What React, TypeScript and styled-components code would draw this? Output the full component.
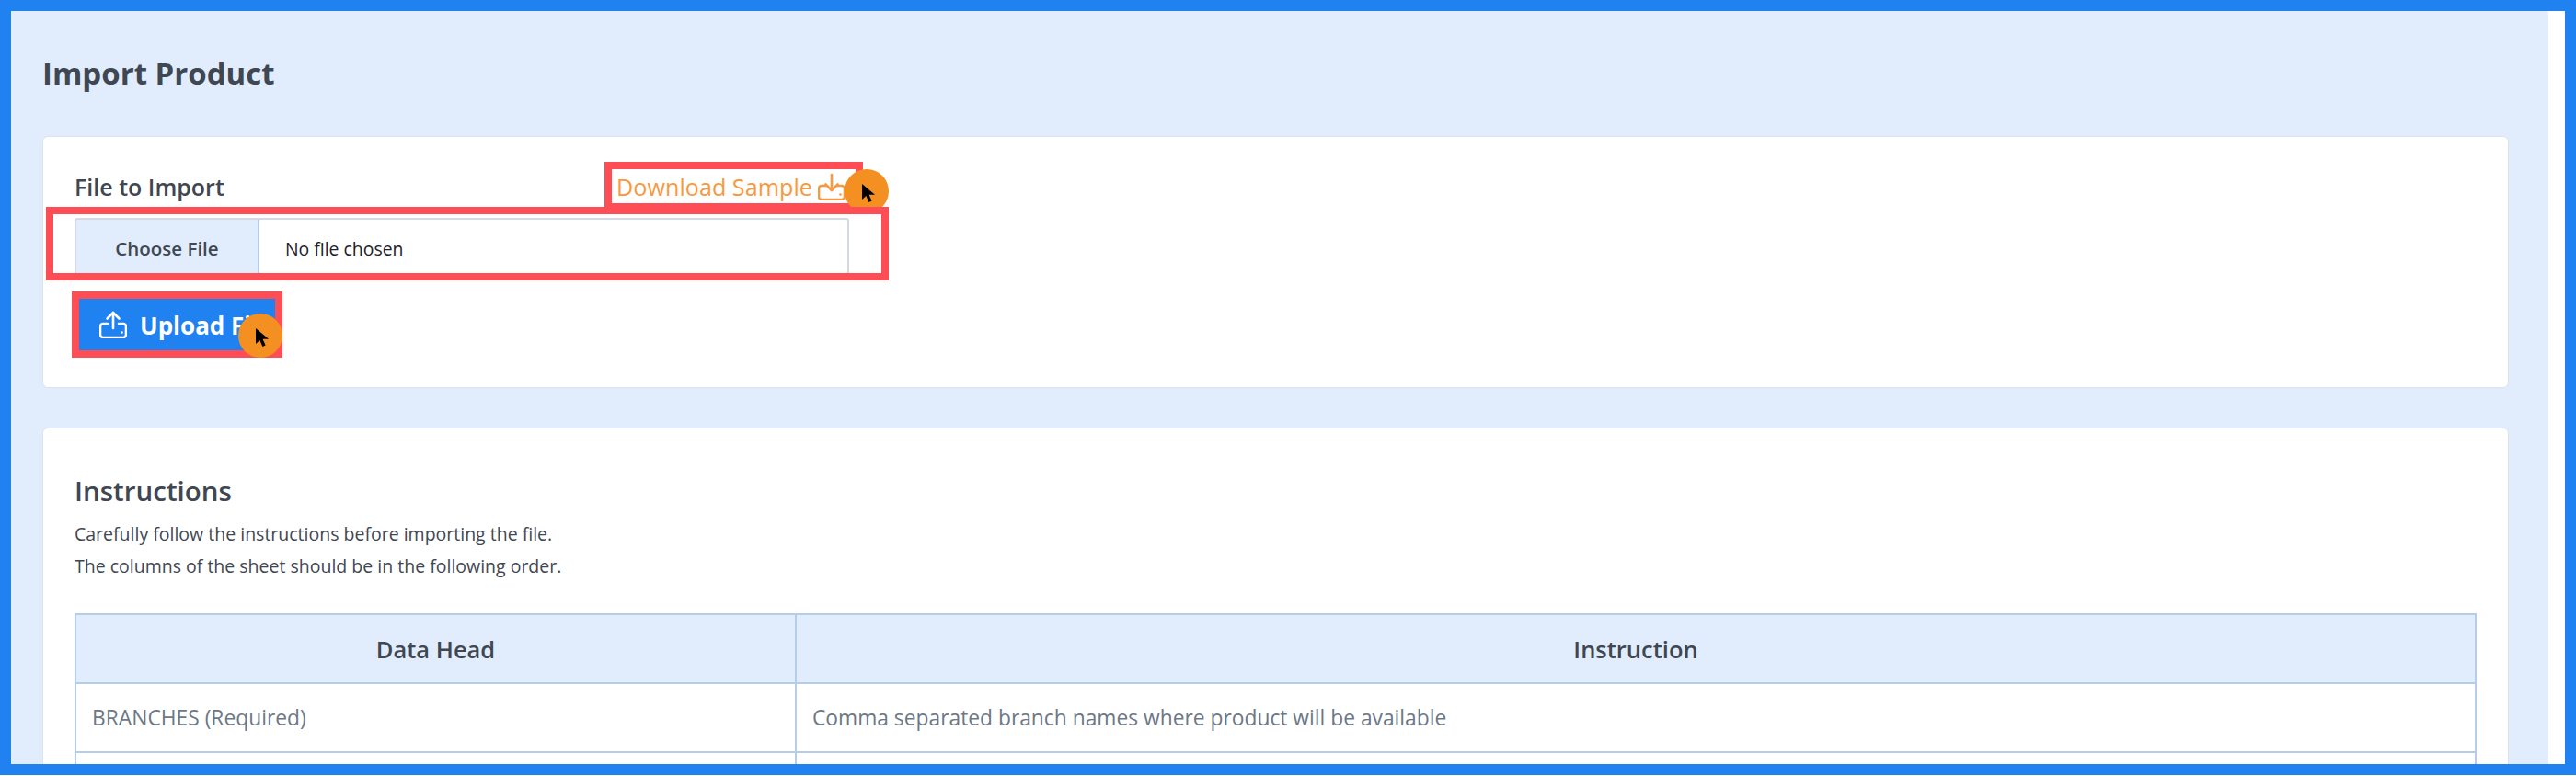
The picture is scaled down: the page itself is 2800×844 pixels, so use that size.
import styled, { createGlobalStyle } from 'styled-components'

const GlobalStyle = createGlobalStyle`
  html, body {
    margin: 0;
    padding: 0;
    background: #fff;
    overflow: hidden;
  }
  * {
    box-sizing: border-box;
  }
`;

function UploadIcon() {
  return (
    <svg width="30" height="30" viewBox="0 0 30 30" fill="none" stroke="currentColor" strokeWidth="2.6" strokeLinecap="round" strokeLinejoin="round">
      <path d="M15 19V2" />
      <path d="M8.5 8.5 15 2l6.5 6.5" />
      <path d="M9 14H4a3 3 0 0 0-3 3v9a3 3 0 0 0 3 3h22a3 3 0 0 0 3-3v-9a3 3 0 0 0-3-3h-5" />
      <path d="M24.5 23.5h.01" />
    </svg>
  );
}

function DownloadIcon() {
  return (
    <svg width="30" height="30" viewBox="0 0 30 30" fill="none" stroke="currentColor" strokeWidth="2.6" strokeLinecap="round" strokeLinejoin="round">
      <path d="M15 2v17" />
      <path d="M8.5 12.5 15 19l6.5-6.5" />
      <path d="M9 14H4a3 3 0 0 0-3 3v9a3 3 0 0 0 3 3h22a3 3 0 0 0 3-3v-9a3 3 0 0 0-3-3h-5" />
      <path d="M24.5 23.5h.01" />
    </svg>
  );
}

function ClickMark({ right, bottom }: { right: number; bottom: number }) {
  return (
    <Click $right={right} $bottom={bottom}>
      <svg width="17" height="21" viewBox="0 0 17 21">
        <path d="M1 0v17l4.4-4 3 7 3.2-1.4-3-6.8H15z" fill="#000" />
      </svg>
    </Click>
  );
}

function App() {
  return (
    <Frame>
      <GlobalStyle />
      <Content>
        <Title>Import Product</Title>
        <Card>
          <LabelRow>
            <Label>File to Import</Label>
            <SampleLink>
              Download Sample
              <DownloadIcon />
              <Highlight />
              <ClickMark right={-36} bottom={-11} />
            </SampleLink>
          </LabelRow>
          <FileInput>
            <ChooseFile>Choose File</ChooseFile>
            <FileName>No file chosen</FileName>
            <InputHighlight />
          </FileInput>
          <UploadButton>
            <UploadIcon />
            <UploadLabel>Upload File</UploadLabel>
            <Highlight />
            <ClickMark right={-8} bottom={-8} />
          </UploadButton>
        </Card>
        <Card>
          <CardTitle>Instructions</CardTitle>
          <Note>Carefully follow the instructions before importing the file.</Note>
          <Note>The columns of the sheet should be in the following order.</Note>
          <Table>
            <colgroup>
              <col width="783" />
              <col />
            </colgroup>
            <thead>
              <tr>
                <Th>Data Head</Th>
                <Th>Instruction</Th>
              </tr>
            </thead>
            <tbody>
              <tr>
                <Td>BRANCHES (Required)</Td>
                <Td>Comma separated branch names where product will be available</Td>
              </tr>
              <tr>
                <Td />
                <Td />
              </tr>
            </tbody>
          </Table>
        </Card>
      </Content>
    </Frame>
  )
}

const Frame = styled.div`
  width: 2800px;
  height: 843px;
  border: 12px solid #2081f0;
  background: #fff;
  overflow: hidden;
  font-family: "Open Sans", "Noto Sans", sans-serif;
  color: #3f4752;
`;

const Content = styled.main`
  width: 2758px;
  min-height: 100%;
  padding: 46px 43px 40px 34px;
  background: #e1edfc;
  display: flex;
  flex-direction: column;
  gap: 43px;
`;

const Title = styled.h1`
  margin: 0 0 3px;
  font-size: 33px;
  line-height: 44px;
  font-weight: 700;
`;

const Card = styled.section`
  background: #fff;
  border: 1px solid #dde3ea;
  border-radius: 6px;
  padding: 35px 34px 40px;
  display: flex;
  flex-direction: column;
  align-items: flex-start;

  & + & {
    padding-top: 48px;
  }
`;

const LabelRow = styled.div`
  width: 842px;
  height: 37px;
  display: flex;
  align-items: center;
  justify-content: space-between;
`;

const Label = styled.label`
  font-size: 25px;
  font-weight: 600;
`;

const SampleLink = styled.a`
  position: relative;
  width: 265px;
  height: 37px;
  margin-right: -7px;
  padding-left: 5px;
  display: flex;
  align-items: center;
  gap: 6px;
  font-size: 25.2px;
  color: #f9993f;
  white-space: nowrap;
`;

const Highlight = styled.span`
  position: absolute;
  inset: -8px;
  border: 8px solid #ff4d55;
`;

const Click = styled.span<{ $right: number; $bottom: number }>`
  position: absolute;
  right: ${(p) => p.$right}px;
  bottom: ${(p) => p.$bottom}px;
  width: 48px;
  height: 48px;
  border-radius: 50%;
  background: #f39021;
  display: flex;
  align-items: center;
  justify-content: center;
  padding: 4px 0 0 4px;
`;

const FileInput = styled.div`
  position: relative;
  width: 842px;
  height: 62px;
  margin-top: 16px;
  display: flex;
  align-items: center;
  border: 2px solid #d3dae3;
  border-radius: 3px;
  font-size: 20px;
`;

const ChooseFile = styled.span`
  width: 199px;
  height: 100%;
  padding-top: 4px;
  background: #e1edfc;
  border-right: 2px solid #b6cde8;
  display: flex;
  align-items: center;
  justify-content: center;
  font-size: 20.5px;
  font-weight: 600;
`;

const FileName = styled.span`
  margin-left: 28px;
  padding-top: 4px;
  font-size: 19.4px;
  font-weight: 500;
  color: #1d2229;
`;

const InputHighlight = styled.span`
  position: absolute;
  top: -14px;
  left: -33px;
  right: -45px;
  bottom: -8px;
  border: 8px solid #ff4d55;
`;

const UploadButton = styled.button`
  position: relative;
  width: 213px;
  height: 56px;
  margin: 26px 0 0 5px;
  padding: 0 0 0 22px;
  border: 0;
  background: #2081f0;
  color: #fff;
  display: flex;
  align-items: center;
  gap: 14px;
  font-family: inherit;
  font-size: 26px;
  font-weight: 700;
  white-space: nowrap;
`;

const UploadLabel = styled.span`
  padding-top: 2px;
`;

const CardTitle = styled.h2`
  margin: 0 0 9px;
  font-size: 29.5px;
  line-height: 40px;
  font-weight: 600;
`;

const Note = styled.p`
  margin: 0;
  font-size: 19.5px;
  line-height: 35px;
  font-weight: 500;
  color: #3f4752;
`;

const Table = styled.table`
  width: 100%;
  margin-top: 34px;
  border-collapse: collapse;
  table-layout: fixed;
`;

const Th = styled.th`
  height: 75px;
  background: #e1edfc;
  border: 2px solid #b6cde8;
  font-size: 25.5px;
  font-weight: 600;
  text-align: center;
`;

const Td = styled.td`
  height: 75px;
  padding: 0 17px;
  border: 2px solid #b6cde8;
  font-size: 22.8px;
  color: #6c7886;
`;

export default App
